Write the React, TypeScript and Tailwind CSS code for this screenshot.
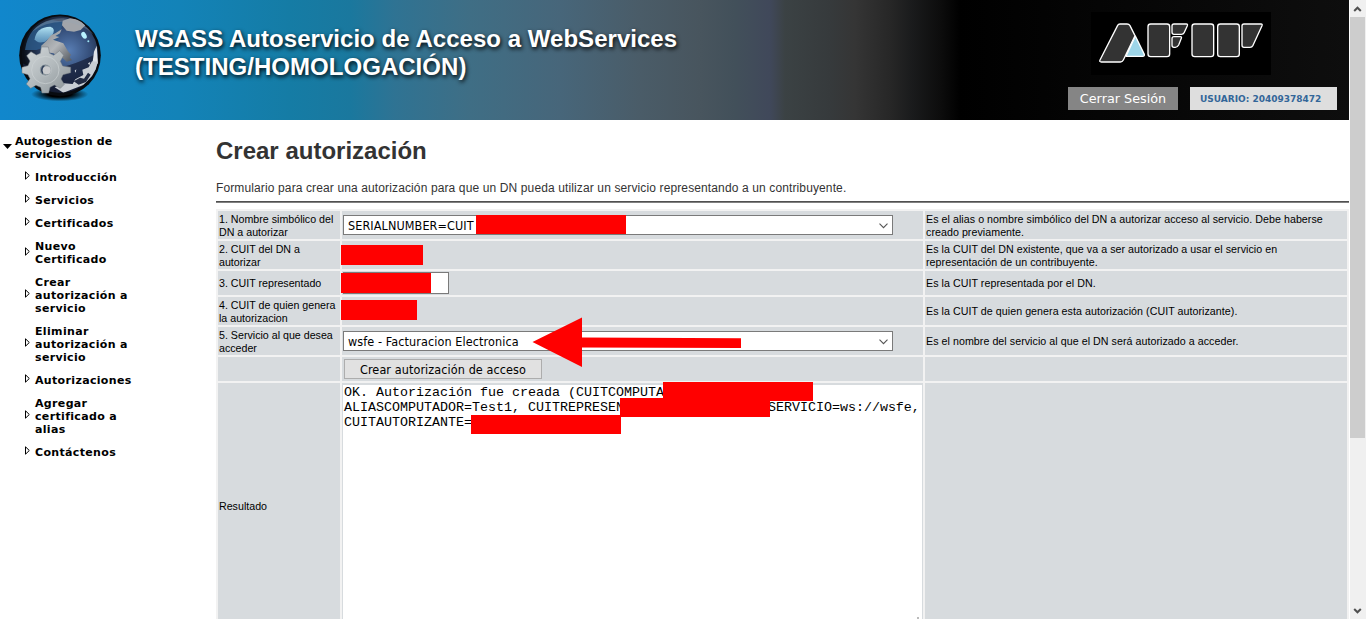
import type { ReactNode } from 'react'

interface MenuEntry {
  lines: string[]
}

const MENU: MenuEntry[] = [
  { lines: ['Introducción'] },
  { lines: ['Servicios'] },
  { lines: ['Certificados'] },
  { lines: ['Nuevo', 'Certificado'] },
  { lines: ['Crear', 'autorización a', 'servicio'] },
  { lines: ['Eliminar', 'autorización a', 'servicio'] },
  { lines: ['Autorizaciones'] },
  { lines: ['Agregar', 'certificado a', 'alias'] },
  { lines: ['Contáctenos'] },
]

export default function App() {
  return (
    <div className="flex h-[632px] w-[1366px] flex-col overflow-hidden bg-white">
      <div className="flex h-[619px] overflow-hidden">
        <div className="w-[1349px] shrink-0">
          <Header />
          <div className="flex">
            <Sidebar />
            <Content />
          </div>
        </div>
        <Scrollbar />
      </div>
    </div>
  )
}

function Header() {
  return (
    <header className="flex h-[120px] bg-[linear-gradient(90deg,#1187cc_0px,#1383b8_180px,#157ca5_290px,#1a789e_350px,#2f7393_395px,#3f6e85_470px,#47667a_560px,#4a5c68_640px,#48555e_700px,#42505a_735px,#40485a_770px,#3b4244_785px,#363a3c_830px,#353535_855px,#272727_890px,#1a1b1c_912px,#0d0d0d_940px,#000_960px,#0e0e0e_1349px)]">
      <GlobeLogo />
      <h1 className="mt-[25px] ml-[33px] w-[600px] font-['Liberation_Sans',Arial,sans-serif] text-[24px] leading-[28px] font-bold tracking-[0.035px] whitespace-nowrap text-white [text-shadow:1px_2px_4px_#000]">
        WSASS Autoservicio de Acceso a WebServices
        <br />
        (TESTING/HOMOLOGACIÓN)
      </h1>
      <div className="mt-3 mr-3 ml-auto flex w-[269px] flex-col">
        <AfipLogo />
        <div className="mt-3 flex justify-between font-['DejaVu_Sans',Verdana,sans-serif]">
          <button className="h-[23px] w-[110px] bg-[#858585] text-[12.8px] leading-[23px] text-white">Cerrar Sesión</button>
          <div className="h-[23px] w-[147px] bg-[#dedede] pl-2.5 text-[9px] leading-[24px] font-bold whitespace-nowrap text-[#336699]">
            USUARIO: 20409378472
          </div>
        </div>
      </div>
    </header>
  )
}

function Sidebar() {
  return (
    <nav className="mt-[15px] w-[216px] shrink-0 font-['DejaVu_Sans',Verdana,sans-serif] text-[11px] leading-[13px] font-bold tracking-[0.34px] whitespace-nowrap text-black">
      <div className="mb-2.5 flex items-center pl-[3px]">
        <svg width="9" height="5" viewBox="0 0 9 5" className="mr-[3px] mb-[3px]">
          <path d="M0 0H9L4.5 5Z" fill="#000" />
        </svg>
        <div className="tracking-[0.2px]">
          Autogestion de
          <br />
          servicios
        </div>
      </div>
      {MENU.map(entry => (
        <div key={entry.lines.join(' ')} className="mb-2.5 flex items-center pl-[25px]">
          <svg width="5" height="9" viewBox="0 0 5 9" className="mr-[5px] mb-1">
            <path d="M0.5 0.8L4.3 4.5L0.5 8.2Z" fill="none" stroke="#000" />
          </svg>
          <div>
            {entry.lines.map(line => (
              <div key={line}>{line}</div>
            ))}
          </div>
        </div>
      ))}
    </nav>
  )
}

function Content() {
  return (
    <main className="w-[1133px] shrink-0 font-['Liberation_Sans',Arial,sans-serif]">
      <h2 className="mt-4 h-[30px] text-[24px] leading-[30px] font-bold text-[#333]">Crear autorización</h2>
      <p className="mt-[14px] h-4 text-[12px] leading-4 tracking-[0.123px] whitespace-nowrap text-[#333]">
        Formulario para crear una autorización para que un DN pueda utilizar un servicio representando a un contribuyente.
      </p>
      <div className="mt-[5px] mb-[6px] h-0.5 border-t border-b border-t-[#505050] border-b-[#808080]" />
      <div className="relative grid grid-cols-[122px_581px_422px] grid-rows-[28px_28px_24px_28px_28px_24px_246px] gap-0.5 bg-[#f2f2f2] p-0.5 text-[10.67px] leading-[13px] text-black">
        <Cell>
          1. Nombre simbólico del
          <br />
          DN a autorizar
        </Cell>
        <FieldCell>
          <SelectBox value="SERIALNUMBER=CUIT" />
        </FieldCell>
        <HelpCell>
          Es el alias o nombre simbólico del DN a autorizar acceso al servicio. Debe haberse
          <br />
          creado previamente.
        </HelpCell>

        <Cell>
          2. CUIT del DN a
          <br />
          autorizar
        </Cell>
        <FieldCell />
        <HelpCell>
          Es la CUIT del DN existente, que va a ser autorizado a usar el servicio en
          <br />
          representación de un contribuyente.
        </HelpCell>

        <Cell>3. CUIT representado</Cell>
        <FieldCell>
          <div className="h-[22px] w-[106px] border border-[#7a7a7a] bg-white" />
        </FieldCell>
        <HelpCell>Es la CUIT representada por el DN.</HelpCell>

        <Cell>
          4. CUIT de quien genera
          <br />
          la autorizacion
        </Cell>
        <FieldCell />
        <HelpCell>Es la CUIT de quien genera esta autorización (CUIT autorizante).</HelpCell>

        <Cell>
          5. Servicio al que desea
          <br />
          acceder
        </Cell>
        <FieldCell>
          <SelectBox value="wsfe - Facturacion Electronica" />
        </FieldCell>
        <HelpCell>Es el nombre del servicio al que el DN será autorizado a acceder.</HelpCell>

        <Cell />
        <FieldCell>
          <button className="ml-px h-5 w-[198px] border border-[#adadad] bg-[#e1e1e1] font-['DejaVu_Sans_Condensed','DejaVu_Sans',Tahoma,sans-serif] text-[12.5px] leading-[19px] tracking-[0.09px] whitespace-nowrap">
            Crear autorización de acceso
          </button>
        </FieldCell>
        <HelpCell />

        <Cell>Resultado</Cell>
        <div className="bg-[#d7dbde] pt-0.5 pr-px pl-px">
          <div className="h-[244px] bg-white pl-px font-['Liberation_Mono','Courier_New',monospace] text-[13.33px] leading-[15px] whitespace-pre">
            <div>OK. Autorización fue creada (CUITCOMPUTA</div>
            <div>ALIASCOMPUTADOR=Test1, CUITREPRESEN                  SERVICIO=ws://wsfe,</div>
            <div>CUITAUTORIZANTE=</div>
          </div>
        </div>
        <HelpCell />

        {/* Redacted values */}
        <div className="absolute top-[6px] left-[260px] h-[19px] w-[150px] bg-[#ff0000]" />
        <div className="absolute top-[36px] left-[125px] h-5 w-[82px] bg-[#ff0000]" />
        <div className="absolute top-[64px] left-[125px] h-5 w-[90px] bg-[#ff0000]" />
        <div className="absolute top-[91px] left-[125px] h-5 w-[76px] bg-[#ff0000]" />
        <div className="absolute top-[173px] left-[447px] h-[19px] w-[150px] bg-[#ff0000]" />
        <div className="absolute top-[189px] left-[404px] h-[19px] w-[150px] bg-[#ff0000]" />
        <div className="absolute top-[206px] left-[255px] h-[19px] w-[150px] bg-[#ff0000]" />

        {/* Arrow pointing at the chosen service */}
        <svg className="absolute top-[108px] left-[316px]" width="210" height="51" viewBox="0 0 210 51">
          <path d="M0.5 25L50 0.5V20.5L209 21.2V31L50 30.5V50Z" fill="#ff0000" />
        </svg>

        {/* Corner grip of the result box */}
        <div className="absolute top-[408px] left-[701px] size-0.5 bg-[#bbb]" />
      </div>
    </main>
  )
}

// Small helper components

function Cell({ children }: { children?: ReactNode }) {
  return (
    <div className="flex items-center bg-[#d7dbde] px-px pt-px whitespace-nowrap">
      <div>{children}</div>
    </div>
  )
}

function HelpCell({ children }: { children?: ReactNode }) {
  return (
    <div className="flex items-center bg-[#d7dbde] px-px pt-px tracking-[0.05px] whitespace-nowrap">
      <div>{children}</div>
    </div>
  )
}

function FieldCell({ children }: { children?: ReactNode }) {
  return <div className="flex items-center bg-[#d7dbde] px-px">{children}</div>
}

function SelectBox({ value }: { value: string }) {
  return (
    <div className="flex h-5 w-[550px] items-center justify-between border border-[#7a7a7a] bg-white pr-1 pl-1 font-['DejaVu_Sans_Condensed','DejaVu_Sans',Tahoma,sans-serif] text-[12.5px] leading-[18px] tracking-[0.1px]">
      <span className="pt-px">{value}</span>
      <svg width="9" height="6" viewBox="0 0 9 6" className="mt-px">
        <path d="M0.5 0.7L4.5 4.7L8.5 0.7" fill="none" stroke="#555" strokeWidth="1.1" />
      </svg>
    </div>
  )
}

function Scrollbar() {
  return (
    <div className="ml-px flex w-4 flex-col items-center bg-[#f0f0f0]">
      <svg width="16" height="17" viewBox="0 0 16 17">
        <path d="M4.2 11L7.5 7.7L10.8 11" fill="none" stroke="#505050" strokeWidth="2" />
      </svg>
      <div className="h-[421px] w-[15px] self-start bg-[#cdcdcd]" />
      <svg width="16" height="17" viewBox="0 0 16 17" className="mt-auto">
        <path d="M4.2 7L7.5 10.3L10.8 7" fill="none" stroke="#505050" strokeWidth="2" />
      </svg>
    </div>
  )
}

function AfipLogo() {
  return (
    <svg width="180" height="63" viewBox="123 36 540 189" className="ml-[23px] bg-black">
      <g fill="#333" stroke="#fff" strokeWidth="4" strokeLinejoin="round">
        <path d="M256 108L283 163Q284 169 278 169H228Z" fill="#9dd5e8" />
        <path d="M203 76Q205 72 210 72H231Q237 72 240 77L255 107L220 180Q217 186 211 186H154Q147 186 150 180Z" />
        <rect x="294" y="72" width="65" height="98" rx="8" />
        <path d="M372 72H409Q414 72 412 77L403 97Q400 103 394 103H372Q366 103 366 97V78Q366 72 372 72Z" />
        <path d="M372 110H391Q396 110 394 115L386 135Q382 142 376 142H372Q366 142 366 136V116Q366 110 372 110Z" />
        <rect x="426" y="72" width="65" height="98" rx="8" />
        <rect x="503" y="72" width="65" height="98" rx="8" />
        <path d="M582 72H633Q638 72 636 77L609 136Q606 142 600 142H582Q576 142 576 136V78Q576 72 582 72Z" />
      </g>
    </svg>
  )
}

function GlobeLogo() {
  return (
    <svg width="84" height="90" viewBox="54 36 252 270" className="mt-3 ml-[18px] shrink-0">
      <defs>
        <radialGradient id="ocean" cx="0.62" cy="0.45" r="0.6">
          <stop offset="0" stopColor="#587db3" />
          <stop offset="0.45" stopColor="#36507c" />
          <stop offset="0.8" stopColor="#1c2942" />
          <stop offset="1" stopColor="#0a0f18" />
        </radialGradient>
        <linearGradient id="shine" x1="0" y1="0" x2="0" y2="1">
          <stop offset="0" stopColor="#b4e4f4" />
          <stop offset="1" stopColor="#6fa9cf" stopOpacity="0.7" />
        </linearGradient>
        <linearGradient id="land" x1="0" y1="0" x2="1" y2="1">
          <stop offset="0" stopColor="#84898f" />
          <stop offset="0.5" stopColor="#b3b6b9" />
          <stop offset="1" stopColor="#50565e" />
        </linearGradient>
        <linearGradient id="steel" x1="0" y1="0" x2="1" y2="1">
          <stop offset="0" stopColor="#d4d9db" />
          <stop offset="0.5" stopColor="#b3babd" />
          <stop offset="1" stopColor="#8a9296" />
        </linearGradient>
        <radialGradient id="shadow">
          <stop offset="0.4" stopColor="#000" />
          <stop offset="1" stopColor="#000" stopOpacity="0" />
        </radialGradient>
        <clipPath id="ball">
          <circle cx="180" cy="163" r="116" />
        </clipPath>
      </defs>
      <ellipse cx="179" cy="283" rx="86" ry="21" fill="url(#shadow)" />
      <circle cx="180" cy="166" r="122.5" fill="#080b10" />
      <circle cx="180" cy="163" r="114" fill="url(#ocean)" />
      <g clipPath="url(#ball)">
        <path d="M68 190Q150 235 292 160V290H68Z" fill="#18203a" opacity="0.75" />
        <path d="M75 150Q85 75 155 60L190 65L170 130L110 150Z" fill="#2d5d8c" opacity="0.8" />
        <path d="M104 118Q108 82 151 80Q170 85 155 108L135 125Q112 132 104 118Z" fill="url(#shine)" />
        <path d="M188 62L210 55L240 60L256 76L242 90L222 95L200 92L186 76Z" fill="#a2a5aa" />
        <path d="M123 138L140 122L153 106L166 100L185 88L180 100L166 108L178 111L159 119L190 130L203 152L213 164L209 172L216 181L200 185L188 174L160 160L132 155Z" fill="url(#land)" />
        <path d="M290 137L282 155L278 185L286 200L294 190Z" fill="#dfe3e8" />
        <path d="M296 185L276 184L266 202L247 209L250 225L226 238L218 252L192 250L164 262L190 278L250 255L285 220Z" fill="#c8cdd3" />
        <path d="M221 244L240 233L252 236L264 218L272 224L258 246L236 254Z" fill="#222b43" />
        <path d="M224 212L229 208L227 218ZM264 190L271 186L268 196Z" fill="#d8dce2" />
      </g>
      <path d="M96 95Q134 53 190 55Q250 62 281 105Q250 70 190 65Q134 65 96 95Z" fill="#98a7b5" opacity="0.35" />
      <ellipse cx="252" cy="106" rx="7" ry="11" transform="rotate(-30 252 106)" fill="#b8f2ff" />
      <circle cx="265" cy="124" r="3" fill="#9fe6f6" />
      <g transform="translate(136 210)" stroke="#737b80" strokeWidth="1.5">
        <path
          d="M-15 -50L-12 -69H9L13 -50L25 -44L43 -58L55 -44L45 -26L52 -12L76 -8V8L53 14L47 27L57 43L45 55L27 45L14 52L10 69H-10L-14 52L-28 46L-44 55L-57 42L-46 26L-52 14L-70 9V-8L-52 -13L-46 -27L-56 -43L-43 -55L-27 -45Z"
          fill="url(#steel)"
          strokeLinejoin="round"
        />
        <circle r="41" fill="none" stroke="#cdd3d5" strokeWidth="2" />
        <circle r="18" fill="#88939a" stroke="#c4cacd" strokeWidth="2" />
        <path d="M-8 -13Q-18 0 -8 13Q-3 0 -2 -14Z" fill="#32425c" stroke="none" />
        <circle cx="4" cy="1" r="12" fill="#c9cbcd" stroke="none" />
      </g>
    </svg>
  )
}
